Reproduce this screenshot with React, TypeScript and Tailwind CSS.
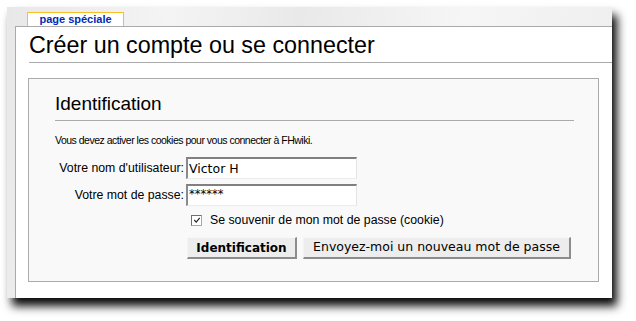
import React from 'react';

const sans = "font-['Liberation_Sans',Arial,sans-serif]";
const lucida = "font-['DejaVu_Sans',Verdana,sans-serif]";

function Field({ label, value, small }: { label: string; value: string; small?: boolean }) {
  return (
    <div className="flex items-center">
      <label className={`w-[155px] text-right text-[12.3px] text-black ${sans}`}>{label}</label>
      <input
        type="text"
        readOnly
        defaultValue={value}
        className={`ml-[2px] h-[22px] w-[171px] bg-white pl-[1px] text-black outline-none border-t-2 border-l-2 border-r border-b border-t-[#808080] border-l-[#8a8a8a] border-r-[#e4e4e4] border-b-[#ececec] ${lucida} ${
          small ? 'text-[11.5px] pb-[4px]' : 'text-[12.5px]'
        }`}
      />
    </div>
  );
}

function Button({ children, bold }: { children: React.ReactNode; bold?: boolean }) {
  return (
    <button
      className={`h-[22px] bg-[#ededed] text-black border-t border-l border-r-2 border-b-2 border-t-[#f7f7f7] border-l-[#f4f4f4] border-r-[#8c8c8c] border-b-[#8c8c8c] ${lucida} ${
        bold ? 'w-[110px] text-[12px] font-bold' : 'w-[268px] text-[12.5px]'
      }`}
    >
      {children}
    </button>
  );
}

export default function App() {
  return (
    <div className="w-[636px] h-[321px] bg-white overflow-hidden pl-[7px] pt-[7px]">
      <div className="w-[605px] h-[291px] overflow-hidden shadow-[5px_8px_9px_rgba(0,0,0,0.97)] bg-[linear-gradient(100deg,#e8e8e8_0%,#f4f4f4_25%,#e9e9e9_45%,#f6f6f6_70%,#ededed_100%)]">
        <div className="ml-[20px] mt-[5px] flex h-[14px] w-[97px] items-center justify-center border-t border-l border-r border-[#fabd23] bg-white">
          <span className={`text-[11px] font-bold leading-none text-[#002bb8] ${sans}`}>page spéciale</span>
        </div>
        <div className="ml-[8px] h-[300px] border-t border-l border-[#aaaaaa] bg-white">
          <h1
            className={`ml-[13px] border-b border-[#aaaaaa] pt-[5px] pb-[3px] text-[23.3px] leading-[27px] font-normal text-black ${sans}`}
          >
            Créer un compte ou se connecter
          </h1>
          <div className="ml-[12px] mr-[13px] mt-[15px] h-[204px] border border-[#aaaaaa] bg-[#f9f9f9]">
            <h2
              className={`ml-[26px] mr-[24px] mt-[14px] border-b border-[#aaaaaa] pb-[5px] text-[19px] leading-[22px] text-black ${sans}`}
            >
              Identification
            </h2>
            <p className={`ml-[26px] mt-[13px] text-[10.5px] leading-[13px] tracking-[-0.5px] text-black ${sans}`}>
              Vous devez activer les cookies pour vous connecter à FHwiki.
            </p>
            <div className="mt-[10px] flex flex-col gap-[5px]">
              <Field label="Votre nom d'utilisateur:" value="Victor H" />
              <Field label="Votre mot de passe:" value="******" small />
            </div>
            <div className="ml-[162px] mt-[4px] flex h-[20px] items-center">
              <span className="flex h-[11px] w-[11px] items-center justify-center border border-t-[#6f6f6f] border-l-[#6f6f6f] border-r-[#a8a8a8] border-b-[#a8a8a8] bg-white">
                <svg viewBox="0 0 9 9" className="h-[8px] w-[8px]">
                  <path d="M1.5 4.5 L3.6 6.8 L7.6 2" fill="none" stroke="#222" strokeWidth="1.3" />
                </svg>
              </span>
              <span className={`ml-[8px] text-[12.3px] text-black ${sans}`}>Se souvenir de mon mot de passe (cookie)</span>
            </div>
            <div className="ml-[158px] mt-[7px] flex gap-[6px]">
              <Button bold>Identification</Button>
              <Button>Envoyez-moi un nouveau mot de passe</Button>
            </div>
          </div>
        </div>
      </div>
    </div>
  );
}
